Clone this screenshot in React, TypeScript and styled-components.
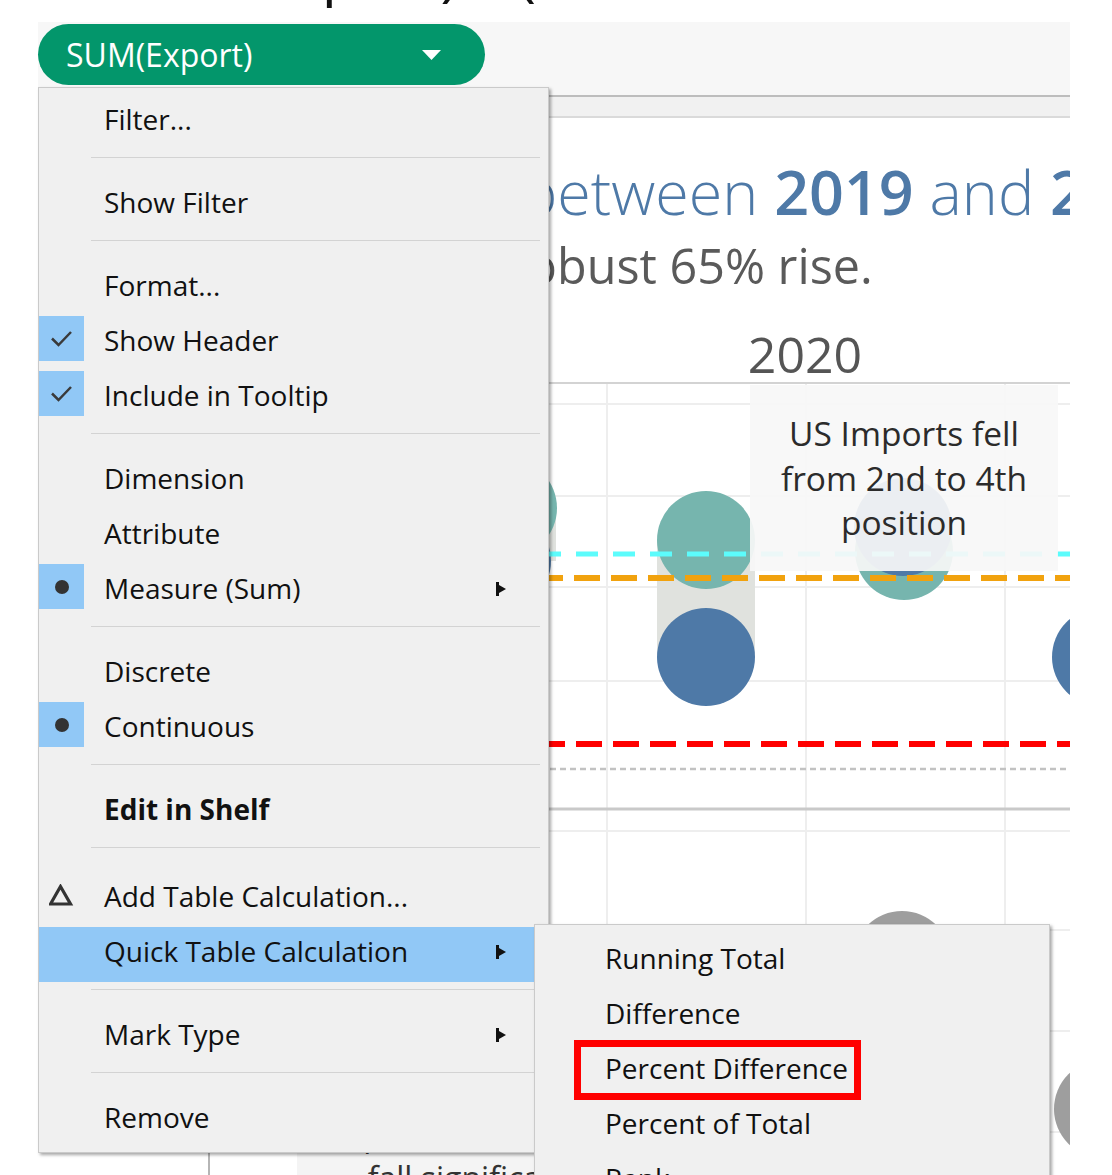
import React, { FC } from "react";
import styled, { createGlobalStyle } from "styled-components";

type MenuEntry =
  | {
      kind: "item";
      label: string;
      mark?: "check" | "dot" | "delta";
      bold?: boolean;
      submenu?: boolean;
      active?: boolean;
    }
  | { kind: "sep"; tall?: boolean };

const menuEntries: MenuEntry[] = [
  { kind: "item", label: "Filter..." },
  { kind: "sep" },
  { kind: "item", label: "Show Filter" },
  { kind: "sep" },
  { kind: "item", label: "Format..." },
  { kind: "item", label: "Show Header", mark: "check" },
  { kind: "item", label: "Include in Tooltip", mark: "check" },
  { kind: "sep" },
  { kind: "item", label: "Dimension" },
  { kind: "item", label: "Attribute" },
  { kind: "item", label: "Measure (Sum)", mark: "dot", submenu: true },
  { kind: "sep" },
  { kind: "item", label: "Discrete" },
  { kind: "item", label: "Continuous", mark: "dot" },
  { kind: "sep" },
  { kind: "item", label: "Edit in Shelf", bold: true },
  { kind: "sep", tall: true },
  { kind: "item", label: "Add Table Calculation...", mark: "delta" },
  { kind: "item", label: "Quick Table Calculation", submenu: true, active: true },
  { kind: "sep" },
  { kind: "item", label: "Mark Type", submenu: true },
  { kind: "sep" },
  { kind: "item", label: "Remove" },
];

const quickCalcs = [
  "Running Total",
  "Difference",
  "Percent Difference",
  "Percent of Total",
  "Rank",
  "Percentile",
  "Moving Average",
];

const TEAL = "#76b5ae";
const BLUE = "#4e79a7";
const GREY = "#9e9e9e";

const GlobalStyle = createGlobalStyle`
  body {
    margin: 0;
    background: #fff;
  }
`;

const CheckIcon: FC = () => (
  <svg width="23" height="17" viewBox="0 0 23 17">
    <path d="M2 8.5 L8.5 15 L21 2" fill="none" stroke="#3a3a3a" strokeWidth="2.5" />
  </svg>
);

const DeltaIcon: FC = () => (
  <svg width="25" height="22" viewBox="0 0 25 22">
    <polygon points="11.5,2.5 21.5,20 1.5,20" fill="none" stroke="#333" strokeWidth="3.2" />
  </svg>
);

const SubArrow: FC = () => (
  <svg width="11" height="14" viewBox="0 0 11 14">
    <path d="M0 0 H3 V14 H0 Z M3 3 L10 7 L3 11 Z" fill="#111" />
  </svg>
);

const Caret: FC = () => (
  <svg width="19" height="10" viewBox="0 0 19 10">
    <polygon points="0,0 19,0 9.5,10" fill="#fff" />
  </svg>
);

const ChartDrawing: FC = () => {
  const hLines = [20, 112, 203, 297, 447, 546, 647, 748];
  const vLines = [397, 596, 795];
  return (
    <Chart width="860" height="790" viewBox="0 0 860 790">
      {hLines.map((y) => (
        <line key={`h${y}`} x1="0" x2="860" y1={y} y2={y} stroke="#eeeeee" strokeWidth="2" />
      ))}
      {vLines.map((x) => (
        <line key={`v${x}`} x1={x} x2={x} y1="0" y2="790" stroke="#eeeeee" strokeWidth="2" />
      ))}
      <line x1="0" x2="860" y1="425" y2="425" stroke="#c9c9c9" strokeWidth="3" />

      <rect x="248" y="124" width="98" height="53" fill="#e0e2de" />
      <circle cx="298" cy="124" r="49" fill={TEAL} />
      <circle cx="292" cy="177" r="49" fill={BLUE} />

      <rect x="447" y="156" width="98" height="117" fill="#e0e2de" />
      <circle cx="496" cy="156" r="49" fill={TEAL} />
      <circle cx="496" cy="273" r="49" fill={BLUE} />

      <circle cx="694" cy="167" r="49" fill={TEAL} />
      <circle cx="693" cy="143" r="49" fill={BLUE} />

      <circle cx="891" cy="273" r="49" fill={BLUE} />
      <circle cx="692" cy="576" r="49" fill={GREY} />
      <circle cx="893" cy="725" r="49" fill={GREY} />

      <line x1="0" x2="860" y1="170" y2="170" stroke="#5cfcfc" strokeWidth="5" strokeDasharray="22 15" strokeDashoffset="4" />
      <line x1="0" x2="860" y1="194" y2="194" stroke="#f1a20e" strokeWidth="6" strokeDasharray="26 11" strokeDashoffset="6" />
      <line x1="0" x2="860" y1="360" y2="360" stroke="#ff0000" strokeWidth="6" strokeDasharray="26 11" strokeDashoffset="4" />
      <line x1="0" x2="860" y1="385" y2="385" stroke="#c2c2c2" strokeWidth="2.5" strokeDasharray="6 4" />
    </Chart>
  );
};

const App: FC = () => {
  return (
    <Page>
      <GlobalStyle />
      <HeadingStrip>
        <HeadingText>
          Export)<HeadingGap>(</HeadingGap>
        </HeadingText>
      </HeadingStrip>

      <ShelfRow>
        <Pill>
          <span>SUM(Export)</span>
          <Caret />
        </Pill>
      </ShelfRow>

      <Dashboard>
        <PaneBand />
        <TitleLine>
          between <strong>2019</strong> and <strong>2020</strong>
        </TitleLine>
        <SubTitle>robust 65% rise.</SubTitle>
        <ColumnHeaderRow>
          <HeaderCell>2020</HeaderCell>
        </ColumnHeaderRow>
        <ChartDrawing />
        <Annotation>
          US Imports fell
          <br />
          from 2nd to 4th
          <br />
          position
        </Annotation>
        <BottomNote>
          Exports to Indonesia
          <br />
          fall significantly
        </BottomNote>
      </Dashboard>

      <ContextMenu>
        {menuEntries.map((entry, i) =>
          entry.kind === "sep" ? (
            <Separator key={i} $tall={entry.tall} />
          ) : (
            <MenuRow key={i} $active={entry.active}>
              <MarkSlot $filled={entry.mark === "check" || entry.mark === "dot"}>
                {entry.mark === "check" && <CheckIcon />}
                {entry.mark === "dot" && <Dot />}
                {entry.mark === "delta" && <DeltaIcon />}
              </MarkSlot>
              <Label $bold={entry.bold}>{entry.label}</Label>
              {entry.submenu && (
                <ArrowSlot>
                  <SubArrow />
                </ArrowSlot>
              )}
            </MenuRow>
          )
        )}
      </ContextMenu>

      <SubMenu>
        {quickCalcs.map((label) => (
          <SubRow key={label}>
            {label}
            {label === "Percent Difference" && <RedBox />}
          </SubRow>
        ))}
      </SubMenu>
    </Page>
  );
};

const Page = styled.div`
  position: relative;
  width: 1112px;
  height: 1175px;
  overflow: hidden;
  background: #fff;
  font-family: "Open Sans", "Noto Sans", sans-serif;
`;

const HeadingStrip = styled.div`
  height: 22px;
  overflow: hidden;
`;

const HeadingText = styled.div`
  margin: -59px 0 0 257px;
  font-size: 60px;
  line-height: 60px;
  white-space: nowrap;
  color: #111;
`;

const HeadingGap = styled.span`
  margin-left: 60px;
`;

const ShelfRow = styled.div`
  margin-left: 38px;
  width: 1032px;
  height: 73px;
  padding-top: 2px;
  box-sizing: border-box;
  background: #f7f7f7;
  display: flex;
  align-items: flex-start;
`;

const Pill = styled.div`
  width: 447px;
  height: 61px;
  border-radius: 31px;
  background: #03966b;
  color: #fff;
  font-size: 32px;
  display: flex;
  align-items: center;
  justify-content: space-between;
  padding: 0 44px 0 28px;
  box-sizing: border-box;
`;

const Dashboard = styled.div`
  position: relative;
  margin-left: 208px;
  width: 862px;
  height: 1080px;
  border-left: 2px solid #b5b5b5;
  box-sizing: border-box;
  overflow: hidden;
  display: flex;
  flex-direction: column;
`;

const PaneBand = styled.div`
  flex-shrink: 0;
  height: 23px;
  box-sizing: border-box;
  border-top: 2px solid #bdbdbd;
  border-bottom: 2px solid #dadada;
  background: #f1f1f1;
`;

const TitleLine = styled.div`
  flex-shrink: 0;
  margin-top: 38px;
  height: 72px;
  line-height: 72px;
  padding-left: 311px;
  white-space: nowrap;
  font-size: 61px;
  font-weight: 300;
  color: #4e79a7;

  strong {
    font-weight: 600;
  }
`;

const SubTitle = styled.div`
  flex-shrink: 0;
  margin-top: 8px;
  height: 58px;
  line-height: 58px;
  padding-left: 298px;
  white-space: nowrap;
  font-size: 48.5px;
  color: #5a5a5a;
`;

const ColumnHeaderRow = styled.div`
  flex-shrink: 0;
  margin-top: 32px;
  height: 58px;
  box-sizing: border-box;
  border-bottom: 2px solid #d3d3d3;
  display: flex;
`;

const HeaderCell = styled.div`
  flex: 1;
  margin-left: 330px;
  text-align: center;
  font-size: 50px;
  line-height: 56px;
  color: #555;
`;

const Chart = styled.svg`
  display: block;
  flex-shrink: 0;
`;

const Annotation = styled.div`
  position: absolute;
  left: 540px;
  top: 290px;
  width: 308px;
  height: 186px;
  background: rgba(247, 247, 247, 0.93);
  display: flex;
  align-items: center;
  justify-content: center;
  text-align: center;
  font-size: 33.5px;
  line-height: 44.5px;
  color: #2b2b2b;
`;

const BottomNote = styled.div`
  position: absolute;
  left: 87px;
  top: 1005px;
  width: 370px;
  height: 200px;
  padding-top: 12px;
  box-sizing: border-box;
  background: #f4f4f4;
  text-align: center;
  white-space: nowrap;
  font-size: 32px;
  line-height: 44px;
  color: #333;
`;

const ContextMenu = styled.div`
  position: absolute;
  left: 38px;
  top: 87px;
  width: 511px;
  padding: 7px 0 4px;
  box-sizing: border-box;
  background: #f0f0f0;
  border: 1px solid #cacaca;
  box-shadow: 2px 2px 3px rgba(0, 0, 0, 0.35);
  font-size: 28px;
  color: #111;
`;

const MenuRow = styled.div<{ $active?: boolean }>`
  display: flex;
  align-items: flex-start;
  height: 55px;
  background: ${(p) => (p.$active ? "#91c8f6" : "transparent")};
`;

const MarkSlot = styled.div<{ $filled?: boolean }>`
  flex-shrink: 0;
  width: 45px;
  height: 45px;
  display: flex;
  align-items: center;
  justify-content: center;
  background: ${(p) => (p.$filled ? "#91c8f6" : "transparent")};
`;

const Dot = styled.div`
  width: 14px;
  height: 14px;
  border-radius: 50%;
  background: #333;
`;

const Label = styled.div<{ $bold?: boolean }>`
  flex: 1;
  margin-left: 20px;
  line-height: 49px;
  white-space: nowrap;
  font-weight: ${(p) => (p.$bold ? 700 : 400)};
`;

const ArrowSlot = styled.div`
  align-self: center;
  display: flex;
  margin: 0 41px 6px 0;
`;

const Separator = styled.div<{ $tall?: boolean }>`
  height: ${(p) => (p.$tall ? 32 : 28)}px;
  padding-top: 7px;
  box-sizing: border-box;

  &::after {
    content: "";
    display: block;
    height: 1px;
    margin: 0 8px 0 52px;
    background: #d3d3d3;
  }
`;

const SubMenu = styled.div`
  position: absolute;
  left: 534px;
  top: 924px;
  width: 516px;
  padding: 7px 0;
  box-sizing: border-box;
  background: #f0f0f0;
  border: 1px solid #cacaca;
  box-shadow: 2px 2px 3px rgba(0, 0, 0, 0.35);
  font-size: 28px;
  color: #111;
`;

const SubRow = styled.div`
  position: relative;
  height: 55px;
  line-height: 53px;
  padding-left: 70px;
  white-space: nowrap;
`;

const RedBox = styled.div`
  position: absolute;
  left: 39px;
  top: -2px;
  width: 287px;
  height: 60px;
  border: 7px solid #ff0000;
  box-sizing: border-box;
`;

export default App;
